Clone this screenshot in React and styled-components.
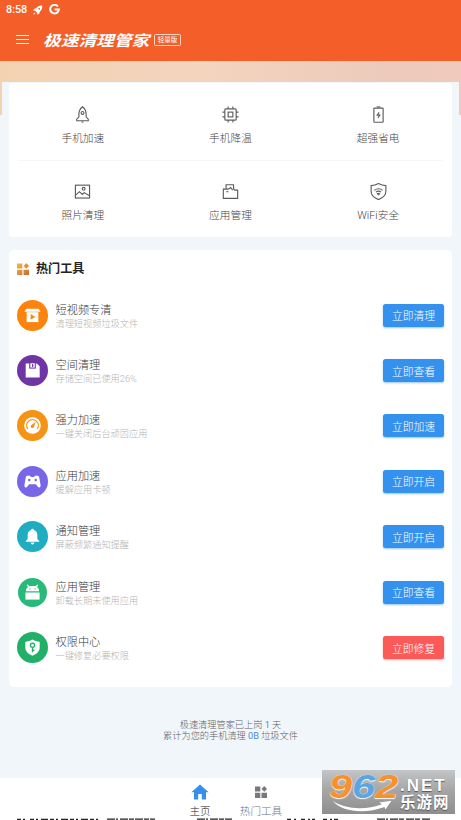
import React from "react";
import styled, { createGlobalStyle } from "styled-components";

const shortcuts = [
  { icon: "rocket", label: "手机加速" },
  { icon: "chip", label: "手机降温" },
  { icon: "battery", label: "超强省电" },
  { icon: "photo", label: "照片清理" },
  { icon: "folder", label: "应用管理" },
  { icon: "wifi", label: "WiFi安全" },
];

const tools = [
  { icon: "video", color: "#fb830e", title: "短视频专清", text: "清理短视频垃圾文件", action: "立即清理" },
  { icon: "disk", color: "#7035a5", title: "空间清理", text: "存储空间已使用26%", action: "立即查看" },
  { icon: "gauge", color: "#f59314", title: "强力加速", text: "一键关闭后台顽固应用", action: "立即加速" },
  { icon: "game", color: "#7966e6", title: "应用加速", text: "缓解应用卡顿", action: "立即开启" },
  { icon: "bell", color: "#1eadc1", title: "通知管理", text: "屏蔽频繁通知提醒", action: "立即开启" },
  { icon: "android", color: "#29b978", title: "应用管理", text: "卸载长期未使用应用", action: "立即查看", small: true },
  { icon: "shield", color: "#22b069", title: "权限中心", text: "一键修复必要权限", action: "立即修复", danger: true },
];

const outlines = {
  rocket: (
    <>
      <path d="M9 .8C6.2 3 5.2 5.5 5.2 8.5v3L2.9 14v1.6h12.2V14l-2.3-2.5v-3C12.8 5.5 11.8 3 9 .8Z" />
      <circle cx="9" cy="7.3" r="1.5" />
      <path d="M8 17h2" />
    </>
  ),
  chip: (
    <>
      <rect x="3" y="3" width="12" height="12" rx="1" />
      <rect x="6.5" y="6.5" width="5" height="5" />
      <path d="M6.5 3V.5M11.5 3V.5M6.5 15v2.5M11.5 15v2.5M3 6.5H.5M3 11.5H.5M15 6.5h2.5M15 11.5h2.5" />
    </>
  ),
  battery: (
    <>
      <rect x="4.1" y="2.2" width="9.8" height="15" rx=".5" />
      <path d="M7 1h4" />
      <path d="M9.6 6.8 7.600 9.700h2.800L8.400 12.700" />
    </>
  ),
  photo: (
    <>
      <rect x="1.5" y="2.3" width="15" height="13.6" />
      <path d="m2 12.500 3.700-3.300 3.100 3 2-2 5.200 3" />
      <circle cx="10.200" cy="6.200" r="1.500" />
    </>
  ),
  folder: (
    <>
      <path d="M4.300 6.200V1.800h7.900v4.200l1.300 1.500h3.100v8.800H1.400V6.500h5.300l2.400-1.700 2.300 2.700" />
      <path d="M4.600 9.200h2.200" />
    </>
  ),
  wifi: (
    <>
      <path d="M9 .600c2.500 1.400 5 2.100 7.800 2.200v6.100c0 4-3.500 6.900-7.800 8.700-4.300-1.800-7.800-4.700-7.800-8.700V2.800C4 2.700 6.500 2 9 .600Z" />
      <path d="M4.700 7.800c2.500-2 6.100-2 8.600 0M6.300 9.700c1.600-1.200 3.800-1.200 5.400 0M7.900 11.400c.7-.5 1.500-.5 2.200 0L9 12.500Z" />
    </>
  ),
};

const glyphs = {
  video: (
    <>
      <path d="M2.400 1.800h13.200L17.500 5H.5Z" />
      <path d="M2.800 5.500h12.400V16H2.800Z" />
      <path d="m7 7.400 4.900 3.100L7 13.600Z" fill="#fb830e" />
    </>
  ),
  disk: (
    <>
      <path d="M1.800 1.500h11.800l3 3v12H1.800Z" />
      <path d="M5.500 1h7v6h-7Z" fill="#7035a5" />
      <path d="M6.700 1.300h4.700v4.600H6.700Z" />
      <path d="M8.500 2h1.300v3.200H8.500Z" fill="#7035a5" />
    </>
  ),
  gauge: (
    <>
      <circle cx="9" cy="9" r="8.800" />
      <path d="M4 12.600A6.200 6.200 0 1 1 14 12.600" fill="none" stroke="#f59314" strokeWidth="1.300" />
      <path d="M12.600 5 10.500 10.300a1.700 1.700 0 1 1-2.600-1.700Z" fill="#f59314" />
    </>
  ),
  game: (
    <>
      <path d="M3.600 2.900h3l.6 1.300h3.600l.6-1.300h3c1 0 1.500.7 1.700 1.700l1.500 8.500c.3 2.300-2 3-3.200 1.300L12.600 12H5.400l-1.800 2.400C2.400 16.100.1 15.400.4 13.100l1.500-8.500c.2-1 .7-1.700 1.700-1.700Z" />
      <circle cx="5.600" cy="7.400" r="1.300" fill="#7966e6" />
      <circle cx="12.400" cy="7.400" r="1.300" fill="#7966e6" />
    </>
  ),
  bell: (
    <>
      <path d="M9 .7c.9 0 1.400.6 1.400 1.500 2.300.7 3.700 2.600 3.700 5v4.400l2 2.100v.8H1.900v-.8l2-2.100V7.200c0-2.400 1.400-4.300 3.700-5C7.600 1.300 8.100.7 9 .7Z" />
      <path d="M7 15.400h4a2 2 0 0 1-4 0Z" />
    </>
  ),
  android: (
    <>
      <path d="M2 7.600c0-2.200 1-3.600 2.400-4.400L2.800 1.400l1-.8 2 1.900c2-.6 4.400-.6 6.400 0l2-1.900 1 .8-1.600 1.800C15 4 16 5.400 16 7.600Z" />
      <path d="M1.500 9h15v7.500h-15Z" />
      <circle cx="6.300" cy="5.200" r=".7" fill="#29b978" />
      <circle cx="11.700" cy="5.200" r=".7" fill="#29b978" />
    </>
  ),
  shield: (
    <>
      <path d="M9 .5c2.600 1.500 5 2.200 7.600 2.500v6.100c0 4.100-3.200 6.900-7.600 8.700-4.400-1.800-7.600-4.600-7.600-8.700V3C4 2.700 6.400 2 9 .5Z" />
      <g fill="none" stroke="#22b069" strokeWidth="1.400">
        <circle cx="9" cy="6.700" r="2.200" />
        <path d="M9 9v5M9.300 11.900H11" />
      </g>
    </>
  ),
};

function TilesIcon({ size, gradient }) {
  return (
    <svg width={size} height={size} viewBox="0 0 12 12" fill={gradient ? "url(#tiles)" : "#77787e"}>
      <defs>
        <linearGradient id="tiles" gradientUnits="userSpaceOnUse" x1="0" y1="0" x2="12" y2="12">
          <stop offset="0" stopColor="#f2bd45" />
          <stop offset="1" stopColor="#c76a35" />
        </linearGradient>
      </defs>
      <path d="M0 .5h5.300v5H0ZM0 6.700h5.300V12H0ZM6.500 6.700H12V12H6.500Z" />
      <path d="m9.300 0 2.700 2.900-2.700 2.800-2.800-2.800Z" />
    </svg>
  );
}

function App() {
  return (
    <Screen>
      <GlobalStyle />
      <Header>
        <StatusBar>
          <span>8:58</span>
          <svg width="10" height="10" viewBox="0 0 10 10" fill="#fff">
            <path d="M9.200.6C6.500.4 4.500 1.500 3.300 3.200L1.300 3.800.2 5.700l1.900.1 2.100 2.100.1 1.900L6.200 8.700l.6-2C8.500 5.500 9.500 3.500 9.200.6Z" />
            <circle cx="6.200" cy="3.800" r=".9" fill="#f45f29" />
            <path d="M.4 9.600 1 7.400l1.600 1.600Z" />
          </svg>
          <svg width="11" height="11" viewBox="0 0 11 11" fill="none" stroke="#fff" strokeWidth="2">
            <path d="M8.900 2.500A4.300 4.300 0 1 0 9.800 5.600H5.600" />
          </svg>
        </StatusBar>
        <TitleBar>
          <Menu>
            <i />
            <i />
            <i />
          </Menu>
          <AppName>极速清理管家</AppName>
          <Edition>轻量版</Edition>
        </TitleBar>
      </Header>

      <Body>
        <Sheet>
          <ShortcutCard>
            {shortcuts.map((item) => (
              <Shortcut key={item.label}>
                <svg width="17" height="17" viewBox="0 0 18 18" fill="none" stroke="#5c5c5c" strokeWidth="1.200">
                  {outlines[item.icon]}
                </svg>
                <span>{item.label}</span>
              </Shortcut>
            ))}
          </ShortcutCard>

          <ToolCard>
            <SectionTitle>
              <TilesIcon size={12} gradient />
              热门工具
            </SectionTitle>
            {tools.map((tool) => (
              <ToolRow key={tool.title}>
                <Badge $color={tool.color} $small={tool.small}>
                  <svg width="17" height="17" viewBox="0 0 18 18" fill="#fff">
                    {glyphs[tool.icon]}
                  </svg>
                </Badge>
                <ToolText>
                  <h3>{tool.title}</h3>
                  <p>{tool.text}</p>
                </ToolText>
                <Action $danger={tool.danger}>{tool.action}</Action>
              </ToolRow>
            ))}
          </ToolCard>

          <Summary>
            <p>
              极速清理管家已上岗 <b>1</b> 天
            </p>
            <p>
              累计为您的手机清理 <b>0B</b> 垃圾文件
            </p>
          </Summary>
        </Sheet>
      </Body>

      <Nav>
        <NavItem $active>
          <svg width="18" height="16" viewBox="0 0 18 16" fill="#3490ea">
            <path d="M9 .4 17.600 8.300H15V15.500H10.800V10H7.200v5.500H3V8.300H.4Z" />
          </svg>
          主页
        </NavItem>
        <NavItem>
          <IconSlot>
            <TilesIcon size={12} />
          </IconSlot>
          热门工具
        </NavItem>
      </Nav>

      <CutLine viewBox="0 0 461 2" stroke="#222" strokeWidth="1.200">
        <path d="M17 1.400h10M30 1.400h69" strokeDasharray="4 2 2 3 7 2" />
        <path d="M107 1.200h11M120 1.200h35M197 1.200h11M210 1.200h22" strokeDasharray="8 1 5 1" />
        <path d="M287 1.400h10M301 1.400h14M323 1.400h18" strokeDasharray="4 3 2 2" />
        <path d="M377 1.200h11M390 1.200h40" strokeDasharray="8 1 5 2" />
      </CutLine>

      <Watermark>
        <Digits>
          <span>9</span>
          <span>6</span>
          <span>2</span>
        </Digits>
        <Site>
          <b>.NET</b>
          <em>乐游网</em>
        </Site>
        <Swoosh viewBox="0 0 68 15" fill="#fff">
          <path d="M0 1c14 10 38 11 57 4L54 3l14-2-7 10-1-3C39 16 12 15 0 1Z" />
        </Swoosh>
      </Watermark>
    </Screen>
  );
}

const GlobalStyle = createGlobalStyle`
  * {
    box-sizing: border-box;
  }
  body {
    margin: 0;
    overflow: hidden;
    font-family: Roboto, "Noto Sans CJK SC", sans-serif;
    font-weight: 300;
  }
  h2, h3, p {
    margin: 0;
    font-weight: inherit;
  }
  svg {
    display: block;
    flex: none;
  }
`;
const Screen = styled.div`
  position: relative;
  display: flex;
  flex-direction: column;
  height: 820px;
  overflow: hidden;
  background: #f1f6fa;
`;
const Header = styled.header`
  flex: none;
  height: 61px;
  background: #f45f29;
  color: #fff;
`;
const StatusBar = styled.div`
  display: flex;
  align-items: center;
  height: 19px;
  padding-left: 6px;
  font-size: 10.8px;
  font-weight: 500;
  svg {
    margin-left: 6px;
  }
`;
const TitleBar = styled.div`
  display: flex;
  align-items: center;
  height: 42px;
  padding-left: 16px;
`;
const Menu = styled.div`
  display: flex;
  flex-direction: column;
  gap: 3px;
  width: 13px;
  margin-top: -1px;
  i {
    height: 1px;
    background: #fff;
  }
`;
const AppName = styled.h2`
  width: 107px;
  margin-left: 14px;
  padding-top: 1px;
  font-size: 15px;
  line-height: 20px;
  font-weight: 700;
  font-style: italic;
  white-space: nowrap;
  transform: scaleX(1.18);
  transform-origin: left center;
`;
const Edition = styled.span`
  width: 27px;
  height: 12px;
  margin-left: 4px;
  border: 1px solid #ffd6c5;
  border-radius: 1.5px;
  font-size: 6.5px;
  line-height: 10px;
  font-weight: 400;
  text-align: center;
`;
const Body = styled.main`
  flex: 1;
  padding: 21px 2px 0;
  background: linear-gradient(90deg, #f3d2b2, #f3d4be 45%, #edcabb 85%, #f0cbbd) no-repeat 0 0 / 100% 54px;
`;
const Sheet = styled.div`
  height: 100%;
  padding: 1px 7px 0;
  background: #f1f6fa;
`;
const ShortcutCard = styled.section`
  display: grid;
  grid-template-columns: repeat(3, 1fr);
  grid-template-rows: 77px 77px;
  border-radius: 3px;
  background: linear-gradient(#f5f6f7, #f5f6f7) no-repeat center / calc(100% - 18px) 1px #fff;
`;
const Shortcut = styled.div`
  display: flex;
  flex-direction: column;
  align-items: center;
  padding-top: 23px;
  font-size: 10.7px;
  line-height: 16px;
  color: #444;
  span {
    margin-top: 8px;
  }
`;
const ToolCard = styled.section`
  height: 437px;
  margin-top: 13px;
  padding: 12px 8px 0;
  border-radius: 5px;
  background: #fff;
`;
const SectionTitle = styled.h2`
  display: flex;
  align-items: center;
  gap: 7px;
  height: 14px;
  margin-bottom: 11.5px;
  font-size: 12.1px;
  line-height: 12px;
  padding-bottom: 1px;
  font-weight: 700;
  color: #222;
`;
const ToolRow = styled.div`
  display: flex;
  align-items: center;
  height: 55.4px;
`;
const Badge = styled.div`
  display: grid;
  place-items: center;
  width: ${(props) => (props.$small ? 29 : 31)}px;
  height: ${(props) => (props.$small ? 29 : 31)}px;
  margin: 0 ${(props) => (props.$small ? 1 : 0)}px;
  border-radius: 50%;
  background: ${(props) => props.$color};
`;
const ToolText = styled.div`
  flex: 1;
  margin-left: 7.5px;
  padding-top: 2px;
  h3 {
    font-size: 11.2px;
    line-height: 15px;
    color: #383838;
  }
  p {
    font-size: 9.2px;
    line-height: 12px;
    color: #b4b4b4;
  }
`;
const Action = styled.button`
  width: 61px;
  height: 23px;
  padding: 0;
  border: 0;
  border-radius: 2.5px;
  background: ${(props) => (props.$danger ? "#fc5a58" : "#3492ee")};
  box-shadow: 0 1px 2px ${(props) => (props.$danger ? "#fc5a5880" : "#3492ee80")};
  font: inherit;
  font-size: 10.8px;
  color: #fff;
`;
const Summary = styled.footer`
  margin-top: 32px;
  font-size: 9.2px;
  line-height: 11px;
  text-align: center;
  color: #5c6064;
  b {
    font-weight: 400;
    color: #4c8be0;
  }
`;
const Nav = styled.nav`
  flex: none;
  display: flex;
  justify-content: center;
  height: 42px;
  background: #fff;
`;
const NavItem = styled.div`
  display: flex;
  flex-direction: column;
  align-items: center;
  gap: 5px;
  width: 61px;
  padding-top: 6px;
  font-size: 10.6px;
  line-height: 14px;
  color: ${(props) => (props.$active ? "#222" : "#707176")};
`;
const IconSlot = styled.div`
  display: grid;
  place-items: center;
  height: 16px;
`;
const CutLine = styled.svg`
  position: absolute;
  left: 0;
  bottom: 0;
  width: 461px;
  height: 2px;
`;
const Watermark = styled.div`
  position: absolute;
  left: 322px;
  top: 770px;
  display: flex;
  width: 133px;
  height: 44px;
  background: linear-gradient(#c3c5c7, #a6a6a6 45%, #8e8e8e);
  font-family: "Liberation Sans", "Noto Sans CJK SC", sans-serif;
  color: #fff;
`;
const Digits = styled.div`
  width: 78px;
  padding-left: 7px;
  font-size: 34px;
  line-height: 33px;
  font-weight: 700;
  font-style: italic;
  white-space: nowrap;
  transform: scaleX(1.22);
  transform-origin: 7px 0;
  text-shadow: 0 0 1px #fff, 0 1px 1px #fff;
  color: #f7902d;
  span:nth-child(2) {
    color: #5ba6e2;
  }
`;
const Site = styled.div`
  display: flex;
  flex-direction: column;
  text-shadow: 0 1px 1px #555;
  b {
    padding-top: 8px;
    font-size: 17px;
    line-height: 16px;
    font-weight: 700;
    letter-spacing: 2px;
  }
  em {
    font-size: 15.5px;
    line-height: 18px;
    font-style: normal;
    font-weight: 700;
    letter-spacing: 1px;
  }
`;
const Swoosh = styled.svg`
  position: absolute;
  left: 6px;
  bottom: 1px;
  width: 68px;
  height: 13px;
`;

export default App;
